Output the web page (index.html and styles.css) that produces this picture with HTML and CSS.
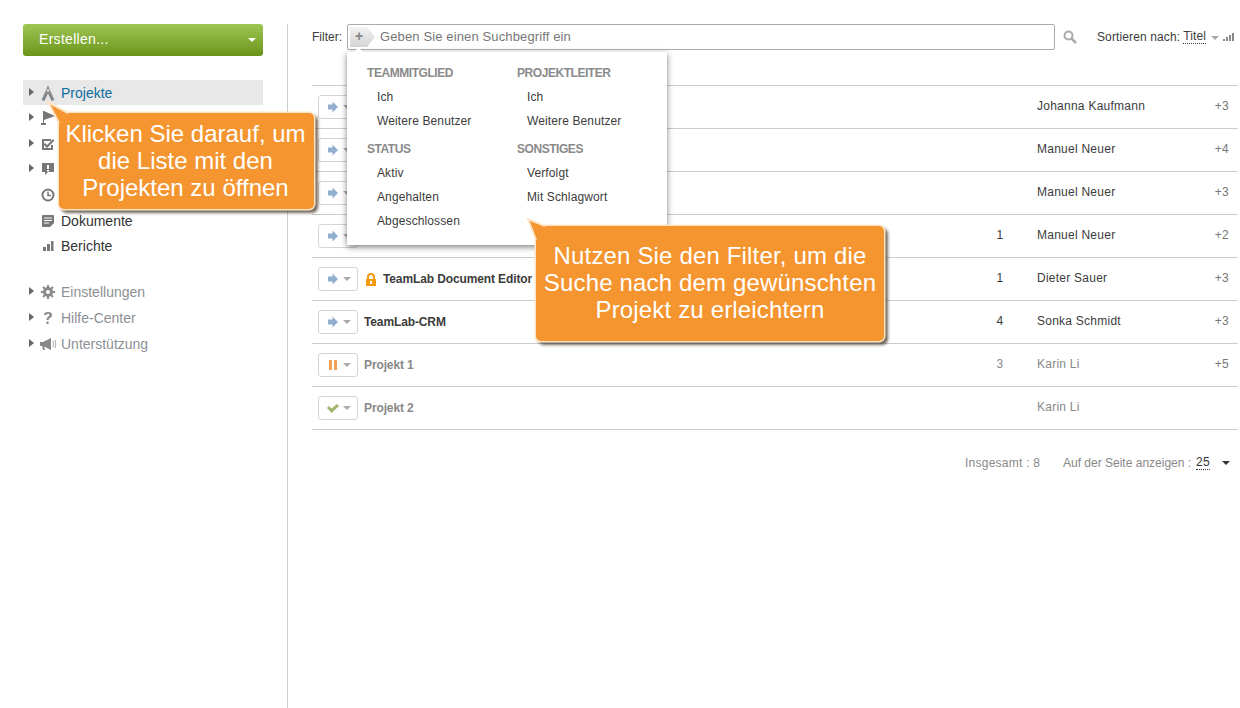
FILE: index.html
```html
<!DOCTYPE html>
<html lang="de">
<head>
<meta charset="utf-8">
<title>Projekte</title>
<link rel="stylesheet" href="styles.css">
</head>
<body>
<div class="page">
  <aside class="sidebar">
    <button class="create"><span>Erstellen...</span><i class="caret caret-white"></i></button>
    <nav class="nav nav-main">
      <a class="nav-row active"><i class="tri"></i><svg class="ni ni-tall" viewBox="0 0 14 16"><path d="M7 0l1.200 3.200L13.500 15l-3 1L7 8.500 3.500 16l-3-1L5.800 3.200z" fill="#858a8f"/><circle cx="7" cy="5.500" r="1.300" fill="#e8e8e8"/></svg><span>Projekte</span></a>
      <a class="nav-row"><i class="tri"></i><svg class="ni" viewBox="0 0 14 14"><path d="M2 0h1v12h2v2H0v-2h2zM3 0l11 5-11 4z" fill="#777"/></svg></a>
      <a class="nav-row"><i class="tri"></i><svg class="ni" viewBox="0 0 14 14"><path d="M1 2h9v2H3v7h7V8h2v5H1z" fill="#777"/><path d="M4 6l2 2 6-6 1.500 1.500L6 11 2.500 7.500z" fill="#777"/></svg></a>
      <a class="nav-row"><i class="tri"></i><svg class="ni" viewBox="0 0 14 14"><path d="M1 1h12v9H7l-3 3v-3H1z" fill="#777"/><path d="M6 3h2v4H6zM6 8h2v1.500H6z" fill="#fff"/></svg></a>
      <a class="nav-row"><i class="tri tri-off"></i><svg class="ni" viewBox="0 0 14 14"><circle cx="7" cy="7" r="5.500" fill="none" stroke="#777" stroke-width="2"/><path d="M7 3.500V7.500h3" fill="none" stroke="#777" stroke-width="1.500"/></svg></a>
      <a class="nav-row"><i class="tri tri-off"></i><svg class="ni" viewBox="0 0 14 14"><path d="M1 2q0-1 1-1h10q1 0 1 1v7l-4 4H2q-1 0-1-1z" fill="#777"/><path d="M3 4h8M3 6.500h8M3 9h5" stroke="#fff"/></svg><span>Dokumente</span></a>
      <a class="nav-row"><i class="tri tri-off"></i><svg class="ni" viewBox="0 0 14 14"><path d="M2 8h3v4H2zM6 5h3v7H6zM10 2h2.500v10H10z" fill="#777"/></svg><span>Berichte</span></a>
    </nav>
    <nav class="nav nav-extra">
      <a class="nav-row muted"><i class="tri"></i><svg class="ni" viewBox="0 0 14 14"><circle cx="7" cy="7" r="3.500" fill="none" stroke="#888" stroke-width="3"/><path d="M7 0v14M0 7h14M2 2l10 10M12 2L2 12" stroke="#888" stroke-width="2" stroke-dasharray="2.500 9 2.500 0"/></svg><span>Einstellungen</span></a>
      <a class="nav-row muted"><i class="tri"></i><svg class="ni" viewBox="0 0 14 14"><path d="M3 4q0-3 4-3t4 3q0 2-2 3-1.500.7-1.500 2h-2q0-2.500 1.800-3.500 1.200-.7 1.200-1.500 0-1.300-1.500-1.300T5.200 4z" fill="#888"/><path d="M5.500 10.500h2V13h-2z" fill="#888"/></svg><span>Hilfe-Center</span></a>
      <a class="nav-row muted"><i class="tri"></i><svg class="ni ni-wide" viewBox="0 0 18 14"><path d="M0 5h3l8-4v12l-8-4H4l1 4H3L2 9H0z" fill="#888"/><path d="M13 4q1 3 0 6M15 3q1.500 4 0 8" fill="none" stroke="#aaa"/></svg><span>Unterstützung</span></a>
    </nav>
  </aside>

  <main class="main">
    <div class="toolbar">
      <label class="filter-label">Filter:</label>
      <div class="filter-box">
        <span class="plus">+</span>
        <span class="placeholder">Geben Sie einen Suchbegriff ein</span>
      </div>
      <svg class="search" viewBox="0 0 14 14"><circle cx="5.500" cy="5.500" r="4" fill="none" stroke="#aaa" stroke-width="2"/><path d="M8.500 8.500L13 13" stroke="#aaa" stroke-width="2.500"/></svg>
      <div class="sort">
        <span>Sortieren nach:</span>
        <span class="dotted">Titel</span>
        <i class="caret caret-grey"></i>
        <svg class="sort-bars" viewBox="0 0 12 8"><path d="M0 6h2v2H0zM3 4h2v4H3zM6 2h2v6H6zM9 0h2v8H9z" fill="#888"/></svg>
      </div>
    </div>

    <div class="list">
      <div class="row"><span class="status"><svg class="st" viewBox="0 0 12 12"><use href="#arrow"/></svg><i class="caret caret-grey"></i></span><span class="name"></span><span class="count"></span><span class="lead">Johanna Kaufmann</span><span class="plusn">+3</span></div>
      <div class="row"><span class="status"><svg class="st" viewBox="0 0 12 12"><use href="#arrow"/></svg><i class="caret caret-grey"></i></span><span class="name"></span><span class="count"></span><span class="lead">Manuel Neuer</span><span class="plusn">+4</span></div>
      <div class="row"><span class="status"><svg class="st" viewBox="0 0 12 12"><use href="#arrow"/></svg><i class="caret caret-grey"></i></span><span class="name"></span><span class="count"></span><span class="lead">Manuel Neuer</span><span class="plusn">+3</span></div>
      <div class="row"><span class="status"><svg class="st" viewBox="0 0 12 12"><use href="#arrow"/></svg><i class="caret caret-grey"></i></span><span class="name"></span><span class="count">1</span><span class="lead">Manuel Neuer</span><span class="plusn">+2</span></div>
      <div class="row"><span class="status"><svg class="st" viewBox="0 0 12 12"><use href="#arrow"/></svg><i class="caret caret-grey"></i></span><span class="name"><svg class="lock" viewBox="0 0 12 13"><path d="M1 6h10v7H1z" fill="#f59a0c"/><path d="M3 6V4q0-3 3-3t3 3v2" fill="none" stroke="#f59a0c" stroke-width="2"/><path d="M5 8h2v3H5z" fill="#fff"/></svg>TeamLab Document Editor</span><span class="count">1</span><span class="lead">Dieter Sauer</span><span class="plusn">+3</span></div>
      <div class="row"><span class="status"><svg class="st" viewBox="0 0 12 12"><use href="#arrow"/></svg><i class="caret caret-grey"></i></span><span class="name">TeamLab-CRM</span><span class="count">4</span><span class="lead">Sonka Schmidt</span><span class="plusn">+3</span></div>
      <div class="row row-off"><span class="status"><svg class="st" viewBox="0 0 12 12"><path d="M2 1h3v10H2zM7 1h3v10H7z" fill="#f0a257"/></svg><i class="caret caret-grey"></i></span><span class="name">Projekt 1</span><span class="count">3</span><span class="lead">Karin Li</span><span class="plusn">+5</span></div>
      <div class="row row-off"><span class="status"><svg class="st" viewBox="0 0 12 12"><path d="M0 6l2-2 2.500 2.500L10 2l2 2-7.500 7z" fill="#9fb56d"/></svg><i class="caret caret-grey"></i></span><span class="name">Projekt 2</span><span class="count"></span><span class="lead">Karin Li</span><span class="plusn"></span></div>
    </div>

    <div class="pager">
      <span class="total">Insgesamt : 8</span>
      <span class="perpage">Auf der Seite anzeigen :</span>
      <span class="dotted pagenum">25</span>
      <i class="caret caret-dark"></i>
    </div>
  </main>

  <div class="menu">
    <div class="menu-tip"></div>
    <div class="menu-col">
      <h4>TEAMMITGLIED</h4>
      <a>Ich</a><a>Weitere Benutzer</a>
      <h4 class="next">STATUS</h4>
      <a>Aktiv</a><a>Angehalten</a><a>Abgeschlossen</a>
    </div>
    <div class="menu-col">
      <h4>PROJEKTLEITER</h4>
      <a>Ich</a><a>Weitere Benutzer</a>
      <h4 class="next">SONSTIGES</h4>
      <a>Verfolgt</a><a>Mit Schlagwort</a>
    </div>
  </div>

  <div class="callout callout-a">
    <svg class="tail" viewBox="0 0 28 28"><path d="M1 1L21 12V22H12z" fill="#f49530"/><path d="M12 22L1 1L21 12" fill="none" stroke="#fde6c8" stroke-width="2"/></svg>
    <p>Klicken Sie darauf, um die Liste mit den Projekten zu öffnen</p>
  </div>
  <div class="callout callout-b">
    <svg class="tail" viewBox="0 0 28 28"><path d="M1 1L18 8V22H9z" fill="#f49530"/><path d="M9 22L1 1L18 8" fill="none" stroke="#fde6c8" stroke-width="2"/></svg>
    <p>Nutzen Sie den Filter, um die Suche nach dem gewünschten Projekt zu erleichtern</p>
  </div>
</div>
<svg class="defs" width="0" height="0"><defs><path id="arrow" d="M1 3.500h4.500V.5L11 6l-5.500 5.500v-3H1z" fill="#92aecf"/></defs></svg>
</body>
</html>
```
FILE: styles.css
```css
* { box-sizing: border-box; }
html, body { margin: 0; height: 100%; }
body { background: #fff; font: 12px "Liberation Sans", Arial, sans-serif; color: #3c3c3c; overflow: hidden; }
.defs { position: absolute; }
.page { position: relative; display: flex; height: 708px; padding-top: 24px; }

.sidebar { width: 288px; flex: none; padding: 0 24px 0 23px; border-right: 1px solid #ccc; }
.create { display: flex; align-items: center; justify-content: space-between; width: 240px; height: 32px; padding: 0 7px 2px 16px; border: 0; border-radius: 3px; background: linear-gradient(#9fc654, #6a9519); color: #fff; font: 14px "Liberation Sans", Arial, sans-serif; letter-spacing: .3px; }
.caret { display: inline-block; width: 0; height: 0; border-style: solid; border-width: 4px 4px 0; border-color: transparent; }
.caret-white { border-top-color: #fff; margin-top: 2px; }
.caret-grey { border-top-color: #aaa; }
.caret-dark { border-top-color: #333; }

.nav { display: flex; flex-direction: column; gap: .67px; }
.nav-main { margin-top: 24px; }
.nav-extra { margin-top: 21px; }
.nav-row { display: flex; align-items: center; height: 25px; font-size: 14px; color: #333; }
.nav-row.active { background: #e8e8e8; color: #0f6c9e; }
.nav-row.muted { color: #8c9094; }
.tri { width: 0; height: 0; margin: 0 7px 2px 6px; border-style: solid; border-width: 4px 0 4px 5px; border-color: transparent transparent transparent #666; }
.tri-off { border-left-color: transparent; }
.ni { width: 14px; height: 14px; margin-right: 6px; flex: none; }
.ni-tall { height: 16px; }
.ni-wide { width: 18px; margin-left: -1px; margin-right: 3px; }

.main { flex: 1; padding: 0 2px 0 24px; }
.toolbar { display: flex; align-items: center; height: 26px; }
.filter-label { width: 35px; }
.filter-box { display: flex; align-items: center; width: 708px; height: 26px; padding-left: 2px; border: 1px solid #aaa; border-radius: 2px; }
.plus { width: 25px; height: 20px; margin-right: 5px; padding-left: 5px; background: linear-gradient(#f2f2f2, #d4d4d4); clip-path: polygon(0 0, 17px 0, 25px 50%, 17px 100%, 0 100%); color: #888; font: bold 14px/19px "Liberation Sans", Arial, sans-serif; }
.placeholder { color: #777; font-size: 13px; letter-spacing: .13px; padding-bottom: 1px; line-height: 15px; }
.search { width: 14px; height: 14px; margin-left: 8px; flex: none; }
.sort { display: flex; align-items: center; margin-left: 20px; letter-spacing: .12px; white-space: nowrap; }
.sort span + span { margin-left: 3px; }
.sort .caret { margin: 2px 0 0 5px; }
.sort-bars { width: 12px; height: 8px; margin-left: 4px; }
.dotted { border-bottom: 1px dotted #333; line-height: 13px; }

.list { margin-top: 35px; border-bottom: 1px solid #ccc; height: 345px; }
.row { display: grid; grid-template-columns: 46px 1fr 74px 172px 20px; align-items: center; height: 43px; padding: 0 9px 0 6px; border-top: 1px solid #ccc; letter-spacing: .25px; }
.status { display: flex; align-items: center; justify-content: space-between; width: 40px; height: 24px; padding: 0 6px 0 8px; border: 1px solid #d4d4d4; border-radius: 3px; }
.st { width: 12px; height: 12px; }
.name { display: flex; align-items: center; font-weight: bold; letter-spacing: -.12px; }
.lock { width: 12px; height: 13px; margin: 0 6px 0 1px; }
.count, .lead, .plusn { padding-bottom: 2px; }
.count { text-align: center; }
.plusn { text-align: right; color: #777; }
.row-off .name, .row-off .count, .row-off .lead { color: #888; }

.pager { display: flex; align-items: center; margin-top: 26px; padding-left: 653px; color: #888; letter-spacing: .25px; white-space: nowrap; }
.total { width: 98px; }
.perpage { width: 133px; letter-spacing: 0; }
.pagenum { color: #333; }
.pager .caret { margin-left: 12px; }

.menu { position: absolute; left: 347px; top: 52px; display: flex; width: 320px; height: 193px; padding: 14px 0 0 20px; background: #fff; box-shadow: 0 2px 6px rgba(0,0,0,.5); }
.menu-tip { position: absolute; left: 8px; top: -3px; width: 7px; height: 7px; background: #fff; transform: rotate(45deg); }
.menu-col { width: 150px; display: flex; flex-direction: column; }
.menu-col h4 { margin: 0; height: 24px; line-height: 14px; font-size: 12px; font-weight: bold; color: #8a8a8a; letter-spacing: -.45px; }
.menu-col h4.next { margin-top: 4px; }
.menu-col a { height: 24px; line-height: 14px; padding-left: 10px; color: #3c3c3c; letter-spacing: .12px; }

.callout { position: absolute; display: flex; align-items: center; background: #f49530; border-radius: 5px; color: #fff; font-size: 24px; line-height: 27px; text-align: center; box-shadow: 0 0 0 1.500px #fde6c8, 3px 3px 3px 1px rgba(70,55,40,.75); }
.callout p { position: relative; margin: 0; width: 100%; }
.callout-a { left: 59px; top: 113px; width: 255px; height: 96px; padding: 0 6px 2px 4px; }
.callout-b { left: 536px; top: 226px; width: 348px; height: 115px; padding: 0 0 3px; letter-spacing: .16px; }
.tail { position: absolute; width: 28px; height: 28px; overflow: visible; }
.callout-a .tail { left: -12px; top: -12px; }
.callout-b .tail { left: -9px; top: -8px; }
```
